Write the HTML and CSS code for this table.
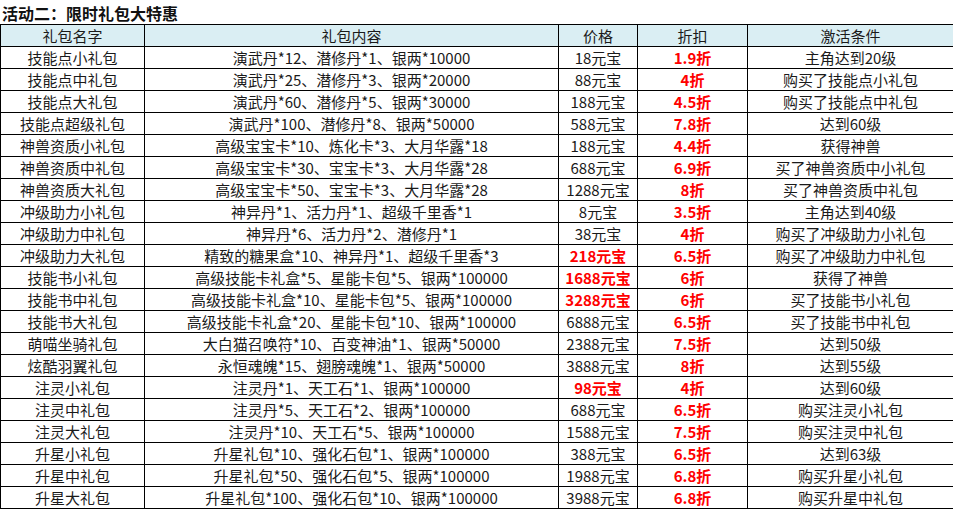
FILE: index.html
```html
<!DOCTYPE html>
<html lang="zh">
<head>
<meta charset="utf-8">
<link rel="stylesheet" href="styles.css">
</head>
<body>
<h1 class="title">活动二：限时礼包大特惠</h1>
<table class="gifts">
<colgroup>
<col class="c-name"><col class="c-content"><col class="c-price"><col class="c-disc"><col class="c-cond">
</colgroup>
<thead>
<tr><th>礼包名字</th><th>礼包内容</th><th>价格</th><th>折扣</th><th>激活条件</th></tr>
</thead>
<tbody>
<tr><td>技能点小礼包</td><td>演武丹*12、潜修丹*1、银两*10000</td><td>18元宝</td><td class="red">1.9折</td><td>主角达到20级</td></tr>
<tr><td>技能点中礼包</td><td>演武丹*25、潜修丹*3、银两*20000</td><td>88元宝</td><td class="red">4折</td><td>购买了技能点小礼包</td></tr>
<tr><td>技能点大礼包</td><td>演武丹*60、潜修丹*5、银两*30000</td><td>188元宝</td><td class="red">4.5折</td><td>购买了技能点中礼包</td></tr>
<tr><td>技能点超级礼包</td><td>演武丹*100、潜修丹*8、银两*50000</td><td>588元宝</td><td class="red">7.8折</td><td>达到60级</td></tr>
<tr><td>神兽资质小礼包</td><td>高级宝宝卡*10、炼化卡*3、大月华露*18</td><td>188元宝</td><td class="red">4.4折</td><td>获得神兽</td></tr>
<tr><td>神兽资质中礼包</td><td>高级宝宝卡*30、宝宝卡*3、大月华露*28</td><td>688元宝</td><td class="red">6.9折</td><td>买了神兽资质中小礼包</td></tr>
<tr><td>神兽资质大礼包</td><td>高级宝宝卡*50、宝宝卡*3、大月华露*28</td><td>1288元宝</td><td class="red">8折</td><td>买了神兽资质中礼包</td></tr>
<tr><td>冲级助力小礼包</td><td>神异丹*1、活力丹*1、超级千里香*1</td><td>8元宝</td><td class="red">3.5折</td><td>主角达到40级</td></tr>
<tr><td>冲级助力中礼包</td><td>神异丹*6、活力丹*2、潜修丹*1</td><td>38元宝</td><td class="red">4折</td><td>购买了冲级助力小礼包</td></tr>
<tr><td>冲级助力大礼包</td><td>精致的糖果盒*10、神异丹*1、超级千里香*3</td><td class="red">218元宝</td><td class="red">6.5折</td><td>购买了冲级助力中礼包</td></tr>
<tr><td>技能书小礼包</td><td>高级技能卡礼盒*5、星能卡包*5、银两*100000</td><td class="red">1688元宝</td><td class="red">6折</td><td>获得了神兽</td></tr>
<tr><td>技能书中礼包</td><td>高级技能卡礼盒*10、星能卡包*5、银两*100000</td><td class="red">3288元宝</td><td class="red">6折</td><td>买了技能书小礼包</td></tr>
<tr><td>技能书大礼包</td><td>高级技能卡礼盒*20、星能卡包*10、银两*100000</td><td>6888元宝</td><td class="red">6.5折</td><td>买了技能书中礼包</td></tr>
<tr><td>萌喵坐骑礼包</td><td>大白猫召唤符*10、百变神油*1、银两*50000</td><td>2388元宝</td><td class="red">7.5折</td><td>达到50级</td></tr>
<tr><td>炫酷羽翼礼包</td><td>永恒魂魄*15、翅膀魂魄*1、银两*50000</td><td>3888元宝</td><td class="red">8折</td><td>达到55级</td></tr>
<tr><td>注灵小礼包</td><td>注灵丹*1、天工石*1、银两*100000</td><td class="red">98元宝</td><td class="red">4折</td><td>达到60级</td></tr>
<tr><td>注灵中礼包</td><td>注灵丹*5、天工石*2、银两*100000</td><td>688元宝</td><td class="red">6.5折</td><td>购买注灵小礼包</td></tr>
<tr><td>注灵大礼包</td><td>注灵丹*10、天工石*5、银两*100000</td><td>1588元宝</td><td class="red">7.5折</td><td>购买注灵中礼包</td></tr>
<tr><td>升星小礼包</td><td>升星礼包*10、强化石包*1、银两*100000</td><td>388元宝</td><td class="red">6.5折</td><td>达到63级</td></tr>
<tr><td>升星中礼包</td><td>升星礼包*50、强化石包*5、银两*100000</td><td>1988元宝</td><td class="red">6.8折</td><td>购买升星小礼包</td></tr>
<tr><td>升星大礼包</td><td>升星礼包*100、强化石包*10、银两*100000</td><td>3988元宝</td><td class="red">6.8折</td><td>购买升星中礼包</td></tr>
</tbody>
</table>
</body>
</html>
```
FILE: styles.css
```css
html, body {
  margin: 0;
  padding: 0;
  background: #ffffff;
}
body {
  font-family: "Noto Sans CJK SC", "Noto Sans", sans-serif;
  color: #1a1a1a;
}
.title {
  margin: 0;
  height: 24px;
  padding-left: 2px;
  font-size: 16px;
  line-height: 26px;
  font-weight: 700;
  color: #111;
}
.gifts {
  border-collapse: collapse;
  table-layout: fixed;
  width: 953px;
}
.c-name { width: 144px; }
.c-content { width: 414px; }
.c-price { width: 79px; }
.c-disc { width: 110px; }
.c-cond { width: 206px; }
.gifts th, .gifts td {
  border: 1px solid #000;
  padding: 0;
  height: 21px;
  font-size: 15px;
  line-height: 21px;
  text-align: center;
  white-space: nowrap;
  overflow: hidden;
  font-weight: 400;
}
.gifts th {
  background: #daeef3;
}
.gifts td.red {
  color: #ff0000;
  font-weight: 700;
}
```
